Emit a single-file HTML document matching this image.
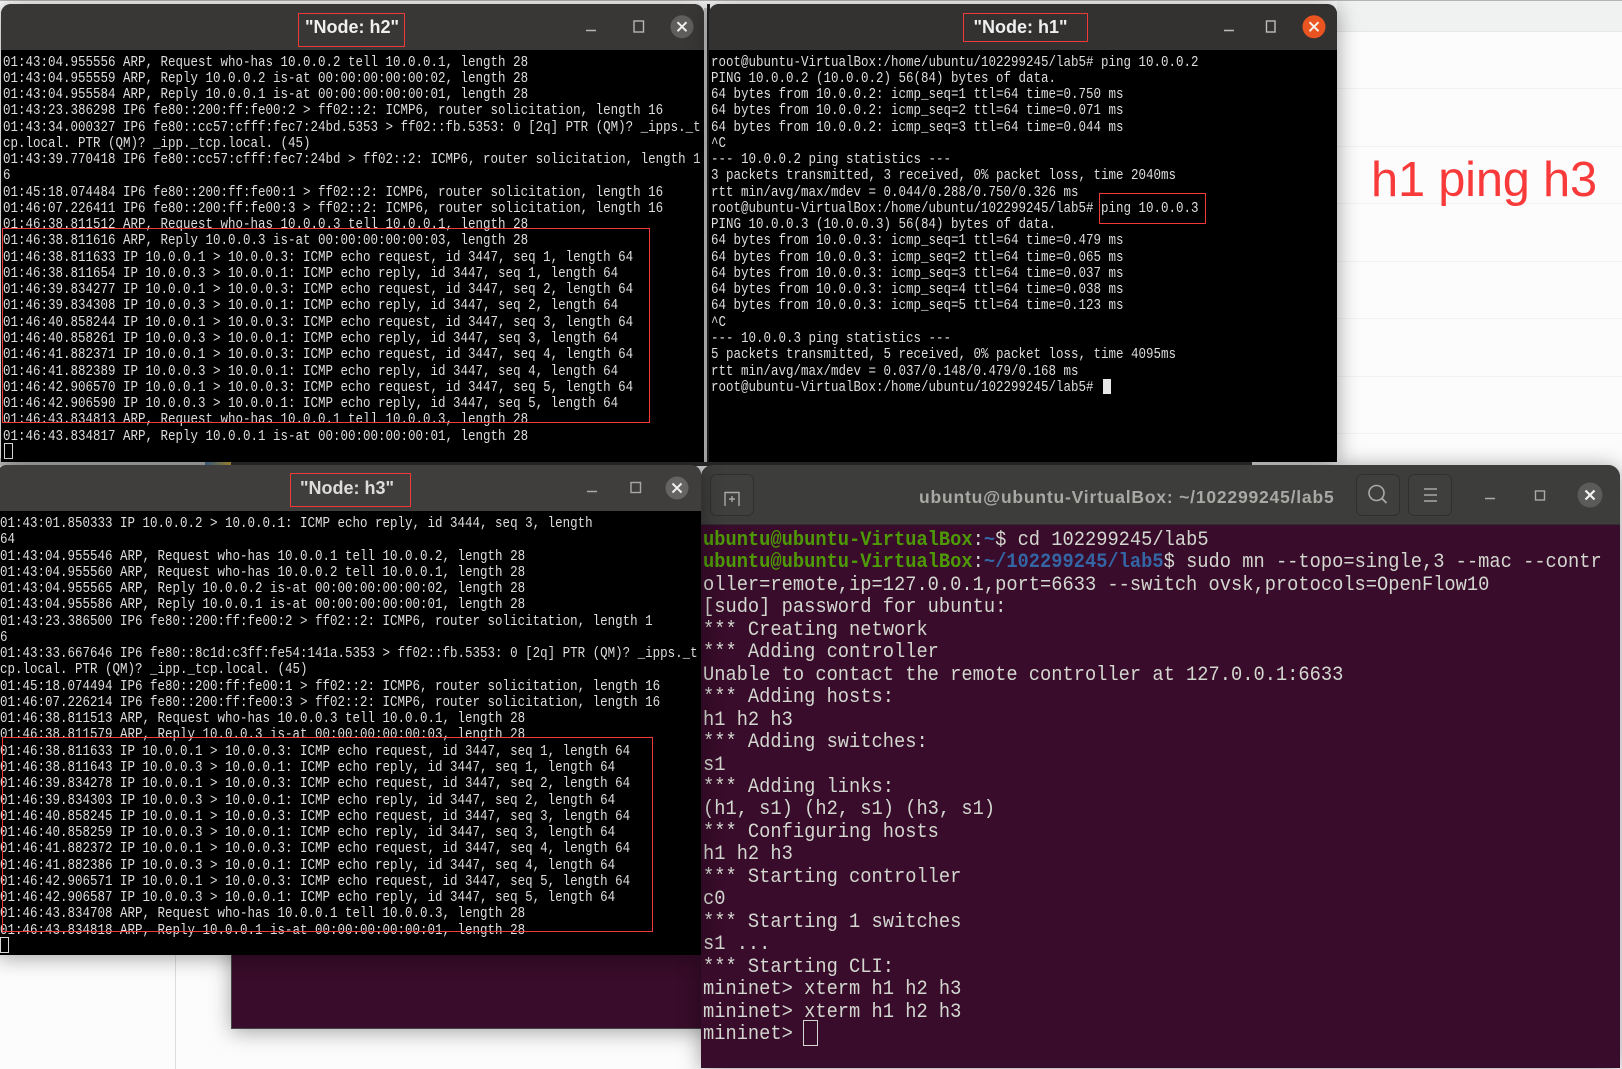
<!DOCTYPE html>
<html lang="en"><head><meta charset="utf-8"><title>Mininet h1 ping h3</title>
<style>
html,body{margin:0;padding:0;width:1622px;height:1069px;overflow:hidden;background:#fcfcfc}
.a{position:absolute}
#root{position:relative;width:1622px;height:1069px;overflow:hidden;background:#fcfcfc}
.hl{position:absolute;left:1337px;right:0;height:1px;background:#f2f2f2}
.win{position:absolute;background:#000;box-shadow:0 2px 22px rgba(0,0,0,.38);border-radius:10px 10px 0 0;overflow:hidden}
.bar{position:absolute;left:0;right:0;top:0}
pre{margin:0;position:absolute;white-space:pre;font-family:"Liberation Mono",monospace}
.x{font-size:15px;line-height:16.27px;color:#dedede;transform:scaleX(.8333);transform-origin:0 0}
.t{font-size:20px;line-height:22.45px;color:#d3d7cf;transform:scaleX(.936);transform-origin:0 0}
.t b.g{color:#4e9a06}.t b.b{color:#3465a4}
.t b{font-weight:bold}
.title{position:absolute;font:bold 18px/22px "Liberation Sans",sans-serif;color:#efefef;white-space:pre}
.r{position:absolute;border:1px solid #f03a3a;box-sizing:border-box;z-index:20}
svg{position:absolute;left:0;top:0}
</style></head><body><div id="root">

<div class="a" style="left:0;top:0;width:1622px;height:1px;background:#b4b4b4"></div>
<div class="a" style="left:1337px;top:1px;width:285px;height:30px;background:#f0f1f1;border-bottom:1px solid #e6e6e6"></div>
<div class="hl" style="top:88px"></div><div class="hl" style="top:146px"></div><div class="hl" style="top:203px"></div><div class="hl" style="top:261px"></div><div class="hl" style="top:318px"></div><div class="hl" style="top:376px"></div><div class="hl" style="top:433px"></div>
<div class="a" style="left:1371px;top:150px;font:48.8px/60px 'Liberation Sans',sans-serif;color:#f83a3a;white-space:pre;letter-spacing:-.2px">h1 ping h3</div>

<div class="a" style="left:175px;top:955px;width:1px;height:114px;background:#dcdcdc"></div>
<div class="a" style="left:231px;top:900px;width:480px;height:129px;background:#380c2a;box-shadow:0 3px 20px rgba(0,0,0,.35);border:1px solid #444;border-top:0;box-sizing:border-box"></div>

<div class="a" style="left:0;top:458px;width:205px;height:8px;background:#cfcfcf"></div>
<div class="a" style="left:205px;top:458px;width:26px;height:8px;background:linear-gradient(90deg,#4d7fb5,#d8b63e)"></div>
<div class="a" style="left:231px;top:458px;width:1021px;height:8px;background:#353535"></div>

<!-- h2 -->
<div class="win" style="left:1px;top:4px;width:703px;height:458px">
<div class="bar" style="height:46px;background:#383735"></div>
<pre class="x" style="left:2px;top:50.5px">01:43:04.955556 ARP, Request who-has 10.0.0.2 tell 10.0.0.1, length 28
01:43:04.955559 ARP, Reply 10.0.0.2 is-at 00:00:00:00:00:02, length 28
01:43:04.955584 ARP, Reply 10.0.0.1 is-at 00:00:00:00:00:01, length 28
01:43:23.386298 IP6 fe80::200:ff:fe00:2 &gt; ff02::2: ICMP6, router solicitation, length 16
01:43:34.000327 IP6 fe80::cc57:cfff:fec7:24bd.5353 &gt; ff02::fb.5353: 0 [2q] PTR (QM)? _ipps._t
cp.local. PTR (QM)? _ipp._tcp.local. (45)
01:43:39.770418 IP6 fe80::cc57:cfff:fec7:24bd &gt; ff02::2: ICMP6, router solicitation, length 1
6
01:45:18.074484 IP6 fe80::200:ff:fe00:1 &gt; ff02::2: ICMP6, router solicitation, length 16
01:46:07.226411 IP6 fe80::200:ff:fe00:3 &gt; ff02::2: ICMP6, router solicitation, length 16
01:46:38.811512 ARP, Request who-has 10.0.0.3 tell 10.0.0.1, length 28
01:46:38.811616 ARP, Reply 10.0.0.3 is-at 00:00:00:00:00:03, length 28
01:46:38.811633 IP 10.0.0.1 &gt; 10.0.0.3: ICMP echo request, id 3447, seq 1, length 64
01:46:38.811654 IP 10.0.0.3 &gt; 10.0.0.1: ICMP echo reply, id 3447, seq 1, length 64
01:46:39.834277 IP 10.0.0.1 &gt; 10.0.0.3: ICMP echo request, id 3447, seq 2, length 64
01:46:39.834308 IP 10.0.0.3 &gt; 10.0.0.1: ICMP echo reply, id 3447, seq 2, length 64
01:46:40.858244 IP 10.0.0.1 &gt; 10.0.0.3: ICMP echo request, id 3447, seq 3, length 64
01:46:40.858261 IP 10.0.0.3 &gt; 10.0.0.1: ICMP echo reply, id 3447, seq 3, length 64
01:46:41.882371 IP 10.0.0.1 &gt; 10.0.0.3: ICMP echo request, id 3447, seq 4, length 64
01:46:41.882389 IP 10.0.0.3 &gt; 10.0.0.1: ICMP echo reply, id 3447, seq 4, length 64
01:46:42.906570 IP 10.0.0.1 &gt; 10.0.0.3: ICMP echo request, id 3447, seq 5, length 64
01:46:42.906590 IP 10.0.0.3 &gt; 10.0.0.1: ICMP echo reply, id 3447, seq 5, length 64
01:46:43.834813 ARP, Request who-has 10.0.0.1 tell 10.0.0.3, length 28
01:46:43.834817 ARP, Reply 10.0.0.1 is-at 00:00:00:00:00:01, length 28</pre>
<div class="a" style="left:3px;top:439px;width:7px;height:14px;border:1px solid #d8d8d8"></div>
<div class="title" style="left:304px;top:12px">"Node: h2"</div>
<svg width="703" height="46" fill="none" stroke="#b5b5b3" stroke-width="1.6"><path d="M585 26.5h10"/><rect x="633" y="17" width="9.5" height="11" stroke-width="1.4"/><circle cx="681" cy="22.7" r="11.5" fill="#5f5e5c" stroke="none"/><path d="M676.5 18.2l9 9M685.500 18.200l-9 9" stroke="#f0f0f0" stroke-width="2"/></svg>
</div>
<div class="a" style="left:704px;top:8px;width:3px;height:454px;background:#bdbdbd"></div>
<div class="a" style="left:707px;top:4px;width:3px;height:458px;background:#222"></div>

<!-- h1 -->
<div class="win" style="left:709px;top:4px;width:628px;height:458px">
<div class="bar" style="height:46px;background:#333231"></div>
<pre class="x" style="left:2px;top:50.500px">root@ubuntu-VirtualBox:/home/ubuntu/102299245/lab5# ping 10.0.0.2
PING 10.0.0.2 (10.0.0.2) 56(84) bytes of data.
64 bytes from 10.0.0.2: icmp_seq=1 ttl=64 time=0.750 ms
64 bytes from 10.0.0.2: icmp_seq=2 ttl=64 time=0.071 ms
64 bytes from 10.0.0.2: icmp_seq=3 ttl=64 time=0.044 ms
^C
--- 10.0.0.2 ping statistics ---
3 packets transmitted, 3 received, 0% packet loss, time 2040ms
rtt min/avg/max/mdev = 0.044/0.288/0.750/0.326 ms
root@ubuntu-VirtualBox:/home/ubuntu/102299245/lab5# ping 10.0.0.3
PING 10.0.0.3 (10.0.0.3) 56(84) bytes of data.
64 bytes from 10.0.0.3: icmp_seq=1 ttl=64 time=0.479 ms
64 bytes from 10.0.0.3: icmp_seq=2 ttl=64 time=0.065 ms
64 bytes from 10.0.0.3: icmp_seq=3 ttl=64 time=0.037 ms
64 bytes from 10.0.0.3: icmp_seq=4 ttl=64 time=0.038 ms
64 bytes from 10.0.0.3: icmp_seq=5 ttl=64 time=0.123 ms
^C
--- 10.0.0.3 ping statistics ---
5 packets transmitted, 5 received, 0% packet loss, time 4095ms
rtt min/avg/max/mdev = 0.037/0.148/0.479/0.168 ms
root@ubuntu-VirtualBox:/home/ubuntu/102299245/lab5# </pre>
<div class="a" style="left:394px;top:375px;width:8px;height:15px;background:#e8e8e8"></div>
<div class="title" style="left:264.500px;top:12px">"Node: h1"</div>
<svg width="628" height="46" fill="none" stroke="#bdbdbb" stroke-width="1.6"><path d="M515 26.500h10"/><rect x="557.500" y="17" width="8.500" height="11" stroke-width="1.4"/><circle cx="605" cy="22.700" r="11.500" fill="#e95420" stroke="none"/><path d="M600.500 18.200l9 9M609.500 18.200l-9 9" stroke="#f8f0ea" stroke-width="2"/></svg>
</div>

<!-- gnome terminal -->
<div class="win" style="left:701px;top:465px;width:919px;height:603px;background:#380c2a;border-radius:12px 12px 0 0">
<div class="bar" style="height:60px;background:#3d3d3c;border-bottom:1px solid #2e2e2e;box-sizing:border-box"></div>
<div class="a" style="left:218px;top:20px;width:425px;font:bold 17.5px/24px 'Liberation Sans',sans-serif;letter-spacing:.8px;color:#a8a8a5;white-space:pre">ubuntu@ubuntu-VirtualBox: ~/102299245/lab5</div>
<svg width="919" height="60" fill="none"><rect x="9.500" y="9.500" width="43" height="41" rx="6" stroke="#2f2f2f" fill="#3f3f3e"/><path d="M24 41V27.500h14V41M31 31v6M28 34h6" stroke="#a9a9a7" stroke-width="1.400"/>
<rect x="655.500" y="9.500" width="43" height="41" rx="6" stroke="#2f2f2f" fill="#3f3f3e"/><circle cx="675.500" cy="28" r="7.500" stroke="#a9a9a7" stroke-width="1.600"/><path d="M681 33.500l4.500 4.500" stroke="#a9a9a7" stroke-width="1.800"/>
<rect x="707.500" y="9.500" width="43" height="41" rx="6" stroke="#2f2f2f" fill="#3f3f3e"/><path d="M723 24h13M723 30h13M723 36h13" stroke="#a9a9a7" stroke-width="1.400"/>
<path d="M784 33.500h10" stroke="#a9a9a7" stroke-width="1.500"/><rect x="834.500" y="26" width="9" height="9" stroke="#a9a9a7" stroke-width="1.400"/>
<circle cx="889" cy="30" r="12.500" fill="#5b5b5a"/><path d="M884.500 25.500l9 9M893.500 25.500l-9 9" stroke="#f2f2f2" stroke-width="2.200"/></svg>
<pre class="t" style="left:2px;top:65px"><b class="g">ubuntu@ubuntu-VirtualBox</b>:<b class="b">~</b>$ cd 102299245/lab5
<b class="g">ubuntu@ubuntu-VirtualBox</b>:<b class="b">~/102299245/lab5</b>$ sudo mn --topo=single,3 --mac --contr
oller=remote,ip=127.0.0.1,port=6633 --switch ovsk,protocols=OpenFlow10
[sudo] password for ubuntu:
*** Creating network
*** Adding controller
Unable to contact the remote controller at 127.0.0.1:6633
*** Adding hosts:
h1 h2 h3
*** Adding switches:
s1
*** Adding links:
(h1, s1) (h2, s1) (h3, s1)
*** Configuring hosts
h1 h2 h3
*** Starting controller
c0
*** Starting 1 switches
s1 ...
*** Starting CLI:
mininet&gt; xterm h1 h2 h3
mininet&gt; xterm h1 h2 h3
mininet&gt; </pre>
<div class="a" style="left:102px;top:555px;width:13px;height:24px;border:1px solid #d3d7cf"></div>
</div>

<!-- h3 -->
<div class="win" style="left:-3px;top:465px;width:704px;height:490px">
<div class="bar" style="height:46px;background:#3f3e3c"></div>
<pre class="x" style="left:3px;top:51px">01:43:01.850333 IP 10.0.0.2 &gt; 10.0.0.1: ICMP echo reply, id 3444, seq 3, length
64
01:43:04.955546 ARP, Request who-has 10.0.0.1 tell 10.0.0.2, length 28
01:43:04.955560 ARP, Request who-has 10.0.0.2 tell 10.0.0.1, length 28
01:43:04.955565 ARP, Reply 10.0.0.2 is-at 00:00:00:00:00:02, length 28
01:43:04.955586 ARP, Reply 10.0.0.1 is-at 00:00:00:00:00:01, length 28
01:43:23.386500 IP6 fe80::200:ff:fe00:2 &gt; ff02::2: ICMP6, router solicitation, length 1
6
01:43:33.667646 IP6 fe80::8c1d:c3ff:fe54:141a.5353 &gt; ff02::fb.5353: 0 [2q] PTR (QM)? _ipps._t
cp.local. PTR (QM)? _ipp._tcp.local. (45)
01:45:18.074494 IP6 fe80::200:ff:fe00:1 &gt; ff02::2: ICMP6, router solicitation, length 16
01:46:07.226214 IP6 fe80::200:ff:fe00:3 &gt; ff02::2: ICMP6, router solicitation, length 16
01:46:38.811513 ARP, Request who-has 10.0.0.3 tell 10.0.0.1, length 28
01:46:38.811579 ARP, Reply 10.0.0.3 is-at 00:00:00:00:00:03, length 28
01:46:38.811633 IP 10.0.0.1 &gt; 10.0.0.3: ICMP echo request, id 3447, seq 1, length 64
01:46:38.811643 IP 10.0.0.3 &gt; 10.0.0.1: ICMP echo reply, id 3447, seq 1, length 64
01:46:39.834278 IP 10.0.0.1 &gt; 10.0.0.3: ICMP echo request, id 3447, seq 2, length 64
01:46:39.834303 IP 10.0.0.3 &gt; 10.0.0.1: ICMP echo reply, id 3447, seq 2, length 64
01:46:40.858245 IP 10.0.0.1 &gt; 10.0.0.3: ICMP echo request, id 3447, seq 3, length 64
01:46:40.858259 IP 10.0.0.3 &gt; 10.0.0.1: ICMP echo reply, id 3447, seq 3, length 64
01:46:41.882372 IP 10.0.0.1 &gt; 10.0.0.3: ICMP echo request, id 3447, seq 4, length 64
01:46:41.882386 IP 10.0.0.3 &gt; 10.0.0.1: ICMP echo reply, id 3447, seq 4, length 64
01:46:42.906571 IP 10.0.0.1 &gt; 10.0.0.3: ICMP echo request, id 3447, seq 5, length 64
01:46:42.906587 IP 10.0.0.3 &gt; 10.0.0.1: ICMP echo reply, id 3447, seq 5, length 64
01:46:43.834708 ARP, Request who-has 10.0.0.1 tell 10.0.0.3, length 28
01:46:43.834818 ARP, Reply 10.0.0.1 is-at 00:00:00:00:00:01, length 28</pre>
<div class="a" style="left:3px;top:472px;width:7px;height:14px;border:1px solid #d8d8d8"></div>
<div class="title" style="left:303px;top:12px;color:#dcdcdc">"Node: h3"</div>
<svg width="704" height="46" fill="none" stroke="#a9a9a7" stroke-width="1.600"><path d="M590 26.500h10"/><rect x="634" y="17.500" width="9.500" height="10" stroke-width="1.400"/><circle cx="680" cy="23" r="11.500" fill="#656462" stroke="none"/><path d="M675.500 18.500l9 9M684.500 18.500l-9 9" stroke="#eeeeee" stroke-width="2"/></svg>
</div>

<!-- red annotation boxes -->
<div class="r" style="left:298px;top:13px;width:107px;height:34px"></div>
<div class="r" style="left:2px;top:228px;width:648px;height:195px"></div>
<div class="r" style="left:963px;top:13px;width:125px;height:29px"></div>
<div class="r" style="left:1099px;top:193px;width:107px;height:31px"></div>
<div class="r" style="left:290px;top:473px;width:121px;height:34px"></div>
<div class="r" style="left:2px;top:737px;width:651px;height:195px"></div>

</div></body></html>
